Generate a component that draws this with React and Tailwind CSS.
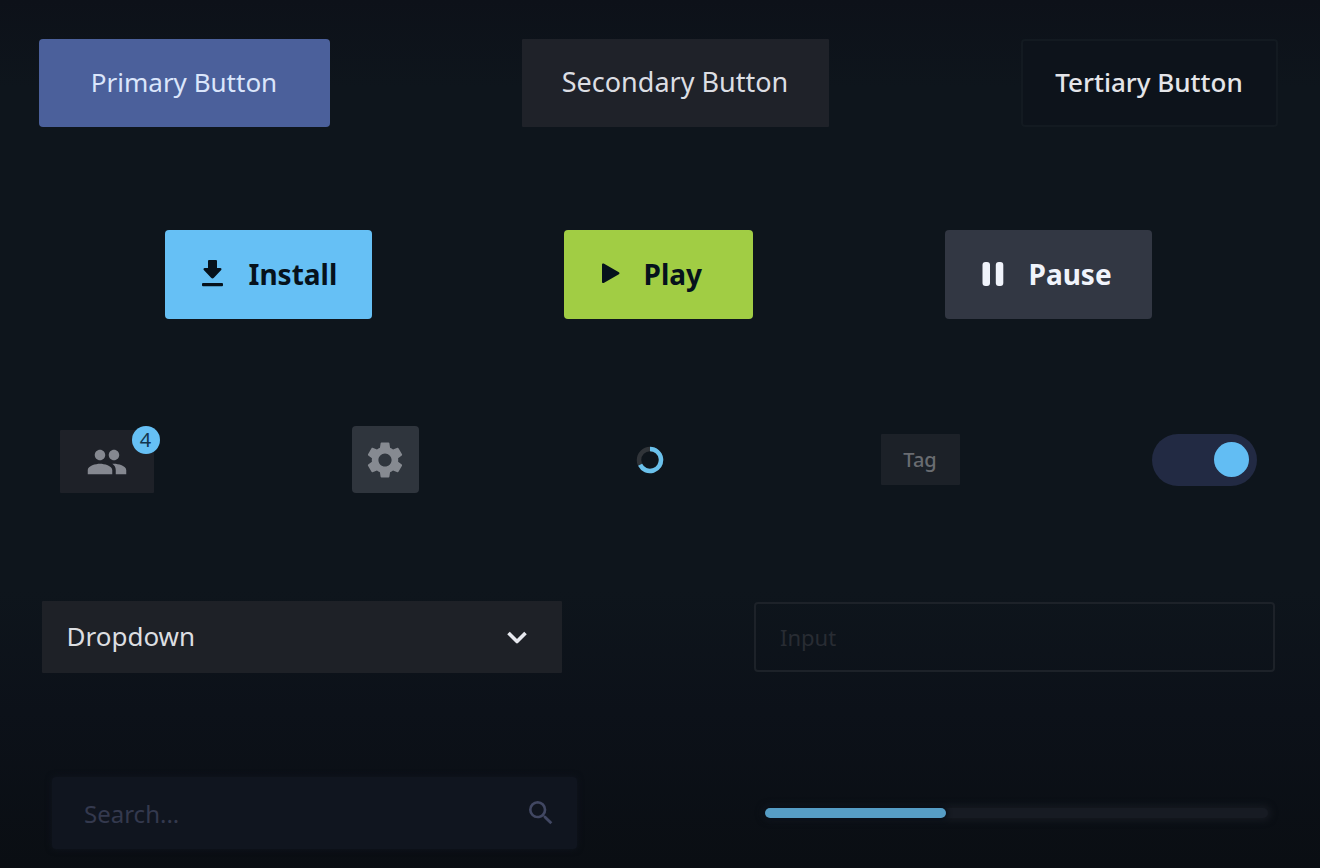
import { MdPeople, MdSettings, MdSearch } from "react-icons/md";

function InstallIcon() {
  return (
    <svg className="h-8 w-6" viewBox="0 0 24 32" fill="currentColor" aria-hidden="true">
      <path d="M8 2h7a1 1 0 0 1 1 1v7h3.3c1.1 0 1.6 1.2.9 2l-7.3 7.8a1.9 1.9 0 0 1-2.8 0L2.8 12c-.7-.8-.2-2 .9-2H7V3a1 1 0 0 1 1-1z" />
      <rect x="1" y="25" width="21" height="3.2" rx="1" />
    </svg>
  );
}

function PlayIcon() {
  return (
    <svg className="h-8 w-6" viewBox="0 0 24 32" fill="currentColor" aria-hidden="true">
      <path d="M2 6.5c0-.9.9-1.4 1.7-.95l15.2 8.7c.8.45.8 1.5 0 1.95l-15.2 8.7c-.8.45-1.7-.1-1.7-1z" />
    </svg>
  );
}

function PauseIcon() {
  return (
    <svg className="h-8 w-6" viewBox="0 0 24 32" fill="currentColor" aria-hidden="true">
      <rect x="1.5" y="4" width="7.5" height="24" rx="3" />
      <rect x="14.8" y="4" width="7.5" height="24" rx="3" />
    </svg>
  );
}

function Spinner() {
  return (
    <div role="status" aria-label="Loading" className="flex w-[78px] items-center justify-center">
      <svg className="h-7 w-7" viewBox="0 0 28 28" fill="none" strokeWidth="4.5" aria-hidden="true">
        <circle cx="14" cy="14" r="11" stroke="#303439" />
        <path d="M14 3a11 11 0 1 1-9.9 15.8" stroke="#6ac1ec" />
      </svg>
    </div>
  );
}

export default function App() {
  return (
    <main className="flex min-h-screen flex-col items-center bg-[linear-gradient(to_bottom,#0d1119_0%,#0e151c_10%,#0e151c_68%,#0c1119_82%,#0a0e13_100%)] pt-[39px] pr-1 pb-[18px] font-['Noto_Sans',sans-serif] text-[26px] leading-8">
      <div className="flex flex-wrap justify-center gap-x-48 gap-y-8">
        <button type="button" className="h-[88px] w-[291px] rounded-sm bg-[#4b609b] pb-0.5 text-[#dbe6fb]">
          Primary Button
        </button>
        <button type="button" className="h-[88px] w-[307px] rounded-[1px] bg-[#1f2229] pb-0.5 text-[27px] text-[#dcdee3]">
          Secondary Button
        </button>
        <button type="button" className="h-[88px] w-[257px] rounded-sm border-2 border-[#131a21] bg-[#0d131b] pb-0.5 font-medium text-[#e4e5e9]">
          Tertiary Button
        </button>
      </div>

      <div className="mt-[103px] flex flex-wrap justify-center gap-x-48 gap-y-8 text-[28px] font-bold">
        <button type="button" className="flex h-[89px] w-[207px] items-center gap-6 rounded-sm bg-[#66c0f5] pb-0.5 pl-9 text-[#06121c]">
          <InstallIcon />
          Install
        </button>
        <button type="button" className="flex h-[89px] w-[189px] items-center gap-5 rounded-sm bg-[#a1cd44] pb-0.5 pl-9 text-[#06121c]">
          <PlayIcon />
          Play
        </button>
        <button type="button" className="flex h-[89px] w-[207px] items-center gap-6 rounded-sm bg-[#323743] pb-0.5 pl-9 text-[#f0f3fb]">
          <PauseIcon />
          Pause
        </button>
      </div>

      <div className="mt-[107px] flex flex-wrap items-center justify-center gap-x-48 gap-y-8">
        <div className="relative pt-1 pr-[6px]">
          <button type="button" aria-label="Friends, 4 online" className="flex h-[63px] w-[94px] items-center justify-center rounded-[1px] bg-[#1e2128] text-[#858890]">
            <MdPeople className="h-[42px] w-[42px]" />
          </button>
          <span className="absolute top-0 right-0 flex h-7 w-7 items-center justify-center rounded-full bg-[#66c0f5] text-xl leading-7 text-[#12354f]">
            4
          </span>
        </div>
        <button type="button" aria-label="Settings" className="flex h-[67px] w-[67px] items-center justify-center rounded-sm bg-[#2f353d] text-[#868a91]">
          <MdSettings className="h-11 w-11" />
        </button>
        <Spinner />
        <span className="flex h-[51px] w-[79px] items-center justify-center rounded-[1px] bg-[#1c2128] text-xl font-medium text-[#696c71]">
          Tag
        </span>
        <input
          type="checkbox"
          role="switch"
          aria-label="Enabled"
          defaultChecked
          className="flex h-[52px] w-[105px] appearance-none items-center rounded-full bg-[#222a43] px-2 before:h-[35px] before:w-[35px] before:rounded-full before:bg-[#5f656f] checked:justify-end checked:before:bg-[#62bdf3]"
        />
      </div>

      <div className="mt-[108px] flex w-full max-w-[1233px] items-center gap-48">
        <div className="relative flex flex-1">
          <select aria-label="Dropdown" className="h-[72px] w-full appearance-none rounded-[1px] bg-[#1e2127] pr-16 pb-0.5 pl-[25px] text-[#dcdee1]">
            <option>Dropdown</option>
          </select>
          <svg className="pointer-events-none absolute top-6 right-8 h-6 w-6" viewBox="0 0 24 24" fill="none" stroke="#e6e8ee" strokeWidth="3.6" strokeLinejoin="round" aria-hidden="true">
            <path d="M2.500 8l8.500 8.500 8.500-8.500" />
          </svg>
        </div>
        <div className="flex flex-1">
          <input
            type="text"
            aria-label="Input"
            placeholder="Input"
            className="h-[70px] w-full rounded-sm border-2 border-[#1d2229] bg-transparent px-6 text-[22px] text-[#dcdee1] placeholder:text-[#282c33]"
          />
        </div>
      </div>

      <div className="mt-[104px] flex w-full max-w-[1220px] items-center gap-[188px] pl-1">
        <div className="relative flex flex-[526]">
          <input
            type="search"
            aria-label="Search"
            placeholder="Search..."
            className="h-[72px] w-full rounded-sm bg-[#10151f] px-8 text-2xl text-[#dcdee1] shadow-[0_0_6px_#10151f] placeholder:text-[#34394e]"
          />
          <MdSearch className="pointer-events-none absolute top-5 right-5 h-8 w-8 text-[#414762]" aria-hidden="true" />
        </div>
        <div
          role="progressbar"
          aria-label="Progress"
          aria-valuemin={0}
          aria-valuemax={100}
          aria-valuenow={36}
          className="h-[10px] flex-[504] rounded-full bg-[#171b23] shadow-[0_0_6px_3px_#151920]"
        >
          <div className="h-full w-[36%] rounded-full bg-[#569dc5] shadow-[0_0_4px_2px_#080e17]" />
        </div>
      </div>
    </main>
  );
}
